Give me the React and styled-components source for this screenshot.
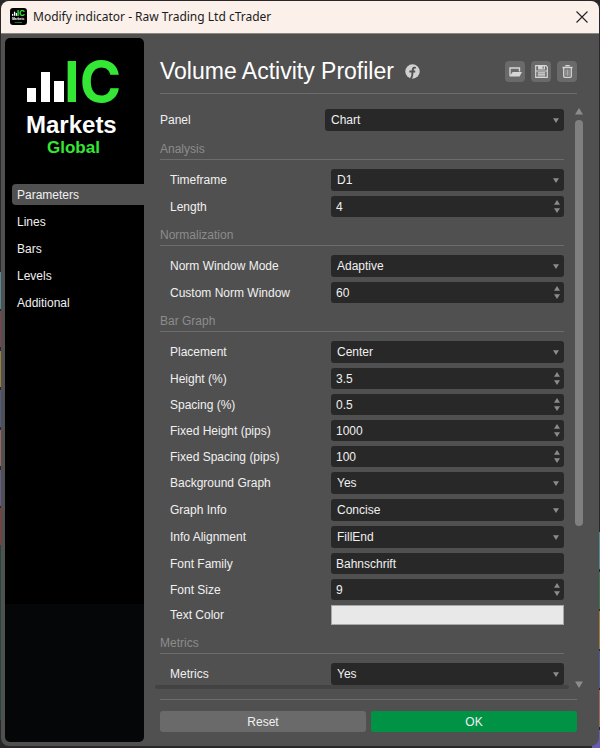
import { useState } from "react";
import styled, { createGlobalStyle, css } from "styled-components";

const PARAMETERS = [
  {
    title: "Analysis",
    rows: [
      { id: "timeframe", label: "Timeframe", type: "select", value: "D1" },
      { id: "length", label: "Length", type: "number", value: "4" },
    ],
  },
  {
    title: "Normalization",
    rows: [
      { id: "normMode", label: "Norm Window Mode", type: "select", value: "Adaptive" },
      { id: "normWindow", label: "Custom Norm Window", type: "number", value: "60" },
    ],
  },
  {
    title: "Bar Graph",
    rows: [
      { id: "placement", label: "Placement", type: "select", value: "Center" },
      { id: "height", label: "Height (%)", type: "number", value: "3.5" },
      { id: "spacing", label: "Spacing (%)", type: "number", value: "0.5" },
      { id: "fixedHeight", label: "Fixed Height (pips)", type: "number", value: "1000" },
      { id: "fixedSpacing", label: "Fixed Spacing (pips)", type: "number", value: "100" },
      { id: "background", label: "Background Graph", type: "select", value: "Yes" },
      { id: "graphInfo", label: "Graph Info", type: "select", value: "Concise" },
      { id: "infoAlignment", label: "Info Alignment", type: "select", value: "FillEnd" },
      { id: "fontFamily", label: "Font Family", type: "text", value: "Bahnschrift" },
      { id: "fontSize", label: "Font Size", type: "number", value: "9" },
      { id: "textColor", label: "Text Color", type: "color", value: "#e8e8e8" },
    ],
  },
  {
    title: "Metrics",
    rows: [{ id: "metrics", label: "Metrics", type: "select", value: "Yes" }],
  },
];

const TABS = ["Parameters", "Lines", "Bars", "Levels", "Additional"];

export default function App() {
  const [activeTab, setActiveTab] = useState("Parameters");

  return (
    <>
      <GlobalStyle />
      <Desktop>
        <Window>
          <TitleBar>
            <AppIcon>
              <Logo />
            </AppIcon>
            <WindowTitle>Modify indicator - Raw Trading Ltd cTrader</WindowTitle>
            <CloseButton aria-label="Close">
              <svg width="12" height="12" viewBox="0 0 12 12">
                <path d="M0.5 0.5L11.5 11.5M11.5 0.5L0.5 11.5" stroke="#222" strokeWidth="1.1" />
              </svg>
            </CloseButton>
          </TitleBar>
          <Body>
            <Sidebar>
              <LogoBox>
                <Logo />
              </LogoBox>
              <Tabs>
                {TABS.map((tab) => (
                  <Tab key={tab} $active={tab === activeTab} onClick={() => setActiveTab(tab)}>
                    {tab}
                  </Tab>
                ))}
              </Tabs>
            </Sidebar>
            <Main>
              <Header>
                <Heading>Volume Activity Profiler</Heading>
                <InfoLink href="#" aria-label="Function info">
                  <FunctionIcon />
                </InfoLink>
                <Tools>
                  <ToolButton aria-label="Load">
                    <FolderIcon />
                  </ToolButton>
                  <ToolButton aria-label="Save">
                    <SaveIcon />
                  </ToolButton>
                  <ToolButton aria-label="Delete">
                    <TrashIcon />
                  </ToolButton>
                </Tools>
              </Header>
              <ScrollArea>
                <Form>
                  <Row>
                    <label htmlFor="panel">Panel</label>
                    <Control id="panel" type="select" value="Chart" />
                  </Row>
                  {PARAMETERS.map((section) => (
                    <section key={section.title}>
                      <SectionTitle>{section.title}</SectionTitle>
                      <Rows>
                        {section.rows.map(({ id, label, type, value }) => (
                          <Row key={id} $nested>
                            <label htmlFor={id}>{label}</label>
                            <Control id={id} type={type} value={value} />
                          </Row>
                        ))}
                      </Rows>
                    </section>
                  ))}
                </Form>
                <ScrollBar>
                  <Arrow size={8} />
                  <Track>
                    <Thumb />
                  </Track>
                  <Arrow size={8} down />
                </ScrollBar>
              </ScrollArea>
              <BottomShadow />
              <Footer>
                <ResetButton>Reset</ResetButton>
                <OkButton>OK</OkButton>
              </Footer>
            </Main>
          </Body>
        </Window>
      </Desktop>
    </>
  );
}

function Control({ id, type, value }) {
  if (type === "select") {
    return (
      <Field>
        <Select id={id} defaultValue={value}>
          <option>{value}</option>
        </Select>
        <SelectArrow>
          <Arrow size={6} down />
        </SelectArrow>
      </Field>
    );
  }
  if (type === "number") {
    return (
      <Field>
        <Input id={id} type="number" step="any" defaultValue={value} />
        <Spinner>
          <SpinButton type="button" aria-label="Increase">
            <Arrow size={6} />
          </SpinButton>
          <SpinButton type="button" aria-label="Decrease">
            <Arrow size={6} down />
          </SpinButton>
        </Spinner>
      </Field>
    );
  }
  if (type === "color") {
    return <ColorInput id={id} type="color" defaultValue={value} />;
  }
  return <Input id={id} type="text" defaultValue={value} />;
}

function Arrow({ size, down }) {
  return (
    <svg width={size} height={size - 1} viewBox="0 0 8 7" preserveAspectRatio="none">
      <path d={down ? "M0 0.5H8L4 7Z" : "M0 6.5H8L4 0Z"} fill="#8c8c8c" />
    </svg>
  );
}

function Logo() {
  return (
    <LogoSvg width="100%" viewBox="0 0 94 98" role="img" aria-label="IC Markets Global">
      <rect x="0" y="28" width="9" height="14" fill="#fff" />
      <rect x="14" y="12" width="9" height="30" fill="#fff" />
      <rect x="27" y="21" width="10" height="21" fill="#fff" />
      <text x="37" y="42" fontFamily="Inter, sans-serif" fontSize="56" fill="#35e735">
        IC
      </text>
      <text x="-1" y="73" fontSize="24" fill="#fff">
        Markets
      </text>
      <text x="20" y="93" fontSize="17" fill="#35e735">
        Global
      </text>
    </LogoSvg>
  );
}

function FunctionIcon() {
  return (
    <svg width="15" height="15" viewBox="0 0 15 15">
      <circle cx="7.5" cy="7.5" r="7.2" fill="#d0d0d0" />
      <path
        d="M10.8 3.9C8.9 3.1 8 4 7.8 5.6L7.2 11.2C7 12.6 6.6 13.6 5.8 14.8M4.4 7.5H10.2"
        fill="none"
        stroke="#505050"
        strokeWidth="1.9"
      />
    </svg>
  );
}

function FolderIcon() {
  return (
    <svg width="13" height="10" viewBox="0 0 13 10">
      <path d="M1 9V1H10.5V4.5" fill="none" stroke="#d6d6d6" strokeWidth="1.4" />
      <path d="M3.6 5H13L10.6 9.4H0.5Z" fill="#d6d6d6" />
    </svg>
  );
}

function SaveIcon() {
  return (
    <svg width="13" height="13" viewBox="0 0 13 13">
      <path d="M0.7 0.7H11L12.3 2V12.3H0.7Z" fill="none" stroke="#d6d6d6" strokeWidth="1.2" />
      <path d="M3 1H10V4.6H3Z" fill="#d6d6d6" />
      <path d="M7.6 1.4H8.8V3.4H7.6Z" fill="#6a6a6a" />
      <path d="M1 6H12" stroke="#d6d6d6" strokeWidth="1" />
      <path d="M2.8 7.6H10.2V12H2.8Z" fill="#a6a6a6" />
      <path d="M2.8 7.6H10.2M2.8 9.7H10.2" stroke="#d6d6d6" strokeWidth="0.8" />
    </svg>
  );
}

function TrashIcon() {
  return (
    <svg width="11" height="13" viewBox="0 0 11 13" fill="none" stroke="#d6d6d6">
      <path d="M3.3 0.7H7.7M0.5 2.5H10.5" strokeWidth="1.3" />
      <path d="M1.7 3V11.2Q1.7 12.3 2.8 12.3H8.2Q9.3 12.3 9.3 11.2V3" strokeWidth="1.3" />
      <path d="M4 4.5V10.8M5.5 4.5V10.8M7 4.5V10.8" stroke="#b4b4b4" strokeWidth="0.9" />
    </svg>
  );
}

const GlobalStyle = createGlobalStyle`
  * {
    box-sizing: border-box;
  }
  body {
    margin: 0;
    background: #2a2728;
    color: #f0f0f0;
    font-family: "Liberation Sans", Arial, sans-serif;
    font-size: 12px;
  }
  button, input, select {
    font: inherit;
    color: inherit;
    border: none;
    padding: 0;
    margin: 0;
  }
  svg {
    display: block;
    flex-shrink: 0;
  }
`;

/* chart bars peek out on both sides of the dialog */
const Desktop = styled.div`
  height: 100vh;
  min-height: 400px;
  padding: 1px 1px 2px;
  background:
    linear-gradient(
        transparent 272px, #4f8c98 272px 309px, #2a2728 309px 311px, #8a3d50 311px 347px,
        #2a2728 347px 351px, #a37c3c 351px 387px, #2a2728 387px 390px, #4d5c8c 390px 427px,
        #2a2728 427px 430px, #a0655c 430px 466px, #2a2728 466px 470px, #665a94 470px 506px,
        #2a2728 506px 508px, #943535 508px 545px, #26463a 545px 720px, transparent 720px
      )
      left / 8px 100% no-repeat,
    linear-gradient(
        transparent 532px, #4f8c98 532px 569px, #2a2728 569px 572px, #3c7a4c 572px 609px,
        #2a2728 609px 611px, #a37c3c 611px 649px, #2a2728 649px 651px, #4d5c8c 651px 688px,
        #2a2728 688px 690px, #a0655c 690px 727px, #2a2728 727px 730px, #665ab4 730px
      )
      right / 8px 100% no-repeat;
`;

const Window = styled.div`
  display: flex;
  flex-direction: column;
  height: 100%;
  border-radius: 8px;
  overflow: hidden;
  background: #505050;
`;

const TitleBar = styled.div`
  display: flex;
  align-items: center;
  gap: 6px;
  height: 33px;
  padding: 0 11px 1px 9px;
  background: #fbf1ea;
  border-bottom: 1px solid #8a8680;
  color: #1c1c1c;
`;

const AppIcon = styled.span`
  display: flex;
  align-items: center;
  width: 17px;
  height: 17px;
  padding: 2px;
  border-radius: 3px;
  background: #000;
`;

const WindowTitle = styled.span`
  flex: 1;
  font-family: "Noto Sans", "Segoe UI", sans-serif;
  font-size: 12px;
`;

const CloseButton = styled.button`
  background: none;
`;

const Body = styled.div`
  display: flex;
  flex: 1;
  min-height: 0;
  padding: 4px 0 4px 4px;
`;

const Sidebar = styled.aside`
  flex: 0 0 139px;
  border-radius: 5px;
  background: linear-gradient(#000 566px, #040608 566px);
`;

const LogoBox = styled.div`
  padding: 22px 23px 0 22px;
  height: 146px;
`;

const LogoSvg = styled.svg`
  overflow: visible;
  font-weight: 700;
`;

const Tabs = styled.nav`
  display: flex;
  flex-direction: column;
  gap: 6px;
  padding-left: 7px;
`;

const Tab = styled.button`
  height: 21px;
  padding-left: 5px;
  text-align: left;
  border-radius: 4px 0 0 4px;
  background: ${({ $active }) => ($active ? "#505050" : "none")};
`;

const Main = styled.main`
  display: flex;
  flex-direction: column;
  flex: 1;
  min-width: 0;
  padding: 0 22px 10px 16px;
`;

const Header = styled.header`
  display: flex;
  align-items: center;
  height: 56px;
  padding-top: 12px;
  border-bottom: 1px solid #6c6c6c;
`;

const Heading = styled.h1`
  margin: 0;
  font-size: 23px;
  font-weight: 400;
  color: #fff;
`;

const InfoLink = styled.a`
  margin-left: 11px;
`;

const Tools = styled.div`
  display: flex;
  gap: 6px;
  margin-left: auto;
`;

const ToolButton = styled.button`
  display: grid;
  place-items: center;
  width: 20px;
  height: 21px;
  border-radius: 4px;
  background: #6a6a6a;
`;

const ScrollArea = styled.div`
  display: flex;
  flex: 1;
  gap: 11px;
  min-height: 0;
  margin-right: -6px;
  padding-top: 14px;
`;

const Form = styled.form`
  flex: 1;
  min-width: 0;
  overflow-y: auto;
  scrollbar-width: none;
  padding-top: 1px;
`;

const SectionTitle = styled.h2`
  margin: 9px 0;
  padding-bottom: 1px;
  font-size: 12px;
  font-weight: 400;
  line-height: 18px;
  color: #8c8c8c;
  border-bottom: 1px solid #6c6c6c;
`;

const Rows = styled.div`
  display: grid;
  gap: 5px;
`;

const Row = styled.div`
  display: grid;
  grid-template-columns: ${({ $nested }) => ($nested ? "161px" : "165px")} 1fr;
  align-items: center;
  padding-left: ${({ $nested }) => ($nested ? "10px" : "0")};
`;

const Field = styled.div`
  position: relative;
`;

const fieldStyle = css`
  display: block;
  width: 100%;
  border-radius: 3px;
  background: #282828;
  appearance: none;
  outline: none;
`;

const Select = styled.select`
  ${fieldStyle}
  height: 22px;
  padding-left: 6px;
`;

const Input = styled.input`
  ${fieldStyle}
  height: 21px;
  padding-left: 5px;
  &[type="number"] {
    appearance: textfield;
  }
`;

const ColorInput = styled.input`
  ${fieldStyle}
  height: 20px;
  border: 1px solid #a8a8a8;
  border-radius: 0;
  &::-webkit-color-swatch-wrapper {
    padding: 0;
  }
  &::-webkit-color-swatch {
    border: none;
    border-radius: 0;
  }
`;

const SelectArrow = styled.span`
  position: absolute;
  top: 9px;
  right: 5px;
  pointer-events: none;
`;

const Spinner = styled.span`
  position: absolute;
  top: 4px;
  right: 4px;
  display: grid;
  gap: 3px;
`;

const SpinButton = styled.button`
  background: none;
`;

const ScrollBar = styled.div`
  display: flex;
  flex-direction: column;
  align-items: center;
  gap: 5px;
  width: 8px;
  margin-bottom: -3px;
`;

const Track = styled.div`
  flex: 1;
  width: 100%;
`;

const Thumb = styled.div`
  height: 73%;
  border-radius: 4px;
  background: #808080;
`;

const BottomShadow = styled.div`
  height: 4px;
  margin: 0 8px 0 -5px;
  border-radius: 2px;
  background: #434343;
`;

const Footer = styled.footer`
  display: grid;
  grid-template-columns: 1fr 1fr;
  gap: 5px;
  margin-top: 10px;
  padding-top: 11px;
  border-top: 1px solid #6c6c6c;
`;

const ResetButton = styled.button`
  height: 21px;
  border-radius: 3px;
  background: #6a6a6a;
`;

const OkButton = styled(ResetButton)`
  background: #009345;
`;
